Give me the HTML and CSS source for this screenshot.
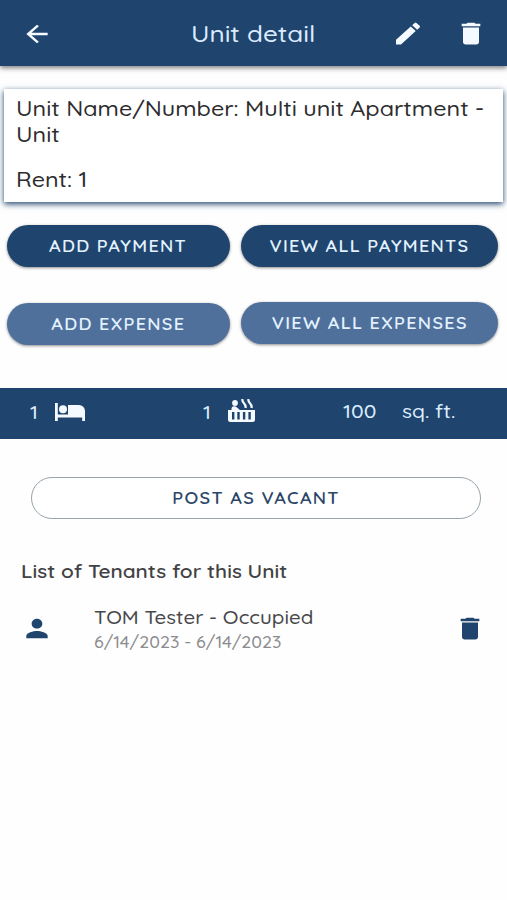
FILE: index.html
```html
<!DOCTYPE html>
<html lang="en">

<head>
    <meta charset="UTF-8">
    <meta name="viewport" content="width=device-width, initial-scale=1.0">
    <title>Unit detail</title>
    <link rel="stylesheet" href="styles.css">
</head>

<body>
    <header class="app-bar">
        <svg class="icon back-icon" viewBox="0 0 24 24" preserveAspectRatio="none">
            <path d="M20 11H7.83l5.59-5.59L12 4l-8 8 8 8 1.41-1.41L7.83 13H20v-2z" />
        </svg>
        <h1 class="title"><span class="wide">Unit detail</span></h1>
        <svg class="icon edit-icon" viewBox="0 0 24 24" preserveAspectRatio="none">
            <path d="M3 17.25V21h3.75L17.81 9.94l-3.75-3.75L3 17.25zM20.71 7.04a1 1 0 0 0 0-1.41l-2.34-2.34a1 1 0 0 0-1.41 0l-1.83 1.83 3.75 3.75 1.83-1.83z" />
        </svg>
        <svg class="icon" viewBox="0 0 24 24" preserveAspectRatio="none">
            <path d="M6 19c0 1.1.9 2 2 2h8c1.1 0 2-.9 2-2V7H6v12zM19 4h-3.5l-1-1h-5l-1 1H5v2h14V4z" />
        </svg>
    </header>

    <section class="unit-card">
        <p><span class="wide">Unit Name/Number: Multi unit Apartment -<br>Unit</span></p>
        <p class="rent"><span class="wide">Rent: 1</span></p>
    </section>

    <div class="actions">
        <button class="btn"><span class="wide">ADD PAYMENT</span></button>
        <button class="btn"><span class="wide">VIEW ALL PAYMENTS</span></button>
    </div>
    <div class="actions expenses">
        <button class="btn btn-light btn-expense"><span class="wide">ADD EXPENSE</span></button>
        <button class="btn btn-light"><span class="wide">VIEW ALL EXPENSES</span></button>
    </div>

    <div class="stats">
        <div class="stat">
            <span class="wide">1</span>
            <svg class="bed-icon" viewBox="0 0 30 18" preserveAspectRatio="none">
                <path d="M0 0h2.800v11.500H13V2h11a6 6 0 0 1 6 6v10h-2.800v-3.500H2.800V18H0z" />
                <circle cx="8" cy="6.3" r="4" />
            </svg>
        </div>
        <div class="stat">
            <span class="wide">1</span>
            <svg class="tub-icon" viewBox="0 0 27 23">
                <circle cx="7" cy="4" r="2.9" />
                <path fill-rule="evenodd" d="M0 11h3.500V9.500Q3.500 7.300 6 7.300q1.800 0 3 1.300l2.800 2.400H27v9.500q0 2.500-2.500 2.500h-22Q0 23 0 20.500zM4 13v7.500h2.400V13zM9.300 13v7.500h2.400V13zM14.900 13v7.500h2.400V13zM20.400 13v7.500h2.400V13z" />
                <path class="steam" d="M14.500 0c-1 4.800 4 3.800 3 9M20.500 0c-1 4.800 4 3.800 3 9" />
            </svg>
        </div>
        <div class="stat area">
            <span class="wide">100</span>
            <span class="wide area-unit">sq. ft.</span>
        </div>
    </div>

    <button class="btn-outline"><span class="wide">POST AS VACANT</span></button>

    <h2 class="list-title"><span class="wide">List of Tenants for this Unit</span></h2>
    <div class="tenant">
        <svg class="icon" viewBox="0 0 24 24" preserveAspectRatio="none">
            <path d="M12 12c2.21 0 4-1.79 4-4s-1.79-4-4-4-4 1.79-4 4 1.79 4 4 4zm0 2c-2.67 0-8 1.34-8 4v2h16v-2c0-2.66-5.33-4-8-4z" />
        </svg>
        <div class="tenant-info">
            <div class="tenant-name"><span class="wide">TOM Tester - Occupied</span></div>
            <div class="tenant-dates"><span class="wide">6/14/2023 - 6/14/2023</span></div>
        </div>
        <svg class="icon" viewBox="0 0 24 24" preserveAspectRatio="none">
            <path d="M6 19c0 1.1.9 2 2 2h8c1.1 0 2-.9 2-2V7H6v12zM19 4h-3.5l-1-1h-5l-1 1H5v2h14V4z" />
        </svg>
    </div>
</body>

</html>
```
FILE: styles.css
```css
* {
    box-sizing: border-box;
}

body {
    margin: 0;
    font-family: Quicksand, Lato, "Open Sans", sans-serif;
    font-weight: 500;
    background-color: #fefefe;
    color: #2d2d2f;
}

h1,
h2,
p {
    margin: 0;
    font-weight: 500;
}

button {
    font-family: inherit;
    padding: 0;
    border: none;
}

/* extended lettering */
.wide {
    display: inline-block;
    white-space: nowrap;
    transform: scaleX(1.13);
    transform-origin: left;
}

.icon {
    width: 32px;
    height: 29px;
    fill: currentColor;
    flex: none;
}

.app-bar {
    display: flex;
    align-items: center;
    height: 66px;
    padding: 1px 20px 0 21px;
    background-color: #1f446d;
    color: #f4faff;
    box-shadow: 0 2px 5px rgba(0, 0, 0, 0.5);
}

.back-icon {
    height: 28px;
}

.title {
    flex: 1;
    padding: 0 0 1px 138px;
    font-size: 23px;
    color: #dcecff;
}

.edit-icon {
    margin-right: 31px;
}

.unit-card {
    height: 113px;
    margin: 23px 4px 0 4px;
    padding: 6px 12px;
    background-color: #fff;
    box-shadow: 0 2px 6px #1f446d;
    font-size: 20.7px;
    line-height: 26px;
}

.unit-card p {
    height: 52px;
}

.unit-card .rent {
    height: 26px;
    margin-top: 19px;
}

.unit-card .wide {
    transform: scaleX(1.127);
}

.actions {
    display: grid;
    grid-template-columns: 223px 257px;
    gap: 11px;
    margin: 23px 0 0 7px;
}

.expenses {
    margin-top: 35px;
}

.btn,
.btn-outline {
    height: 42px;
    padding-bottom: 1px;
    border-radius: 21px;
    font-size: 16px;
    font-weight: 600;
    letter-spacing: 1.15px;
}

.btn .wide,
.btn-outline .wide {
    transform-origin: center;
}

.btn {
    background-color: #1f446d;
    color: #e2f2ff;
    box-shadow: 0 1px 3px rgba(0, 0, 0, 0.45);
}

.btn-light {
    background-color: #50709c;
}

.btn-expense {
    margin: 1px 0 -1px;
}

.stats {
    display: grid;
    grid-template-columns: 173px 140px 1fr;
    align-items: center;
    height: 51px;
    margin-top: 44px;
    padding: 0 0 4px 30px;
    background-color: #1f446d;
    color: #dcecff;
    font-size: 18.7px;
}

.stat {
    display: flex;
    align-items: center;
}

.stat svg {
    fill: #f4faff;
    margin-left: 18px;
}

.bed-icon {
    width: 30px;
    height: 18px;
}

.tub-icon {
    width: 27px;
    height: 23px;
    margin-bottom: 2px;
}

.steam {
    fill: none;
    stroke: #f4faff;
    stroke-width: 2.3;
}

.area {
    padding-bottom: 2px;
}

.stat .area-unit {
    margin-left: 29px;
}

.btn-outline {
    display: block;
    width: 450px;
    margin: 38px 0 0 31px;
    border: 1px solid #98a5ae;
    background-color: #fff;
    color: #2b4668;
}

.list-title {
    margin: 40px 0 0 21px;
    font-size: 18.5px;
    font-weight: 600;
    line-height: 24px;
    color: #424244;
}

.list-title .wide {
    transform: scaleX(1.122);
}

.tenant {
    display: flex;
    align-items: center;
    margin-top: 20px;
    padding: 0 21px;
    color: #1f446d;
}

.tenant-info {
    flex: 1;
    padding: 2px 0 0 41px;
}

.tenant-name {
    font-size: 18.2px;
    line-height: 25px;
    color: #48484a;
}

.tenant-dates {
    font-size: 15.8px;
    line-height: 24px;
    color: #8c8c8e;
}
```
